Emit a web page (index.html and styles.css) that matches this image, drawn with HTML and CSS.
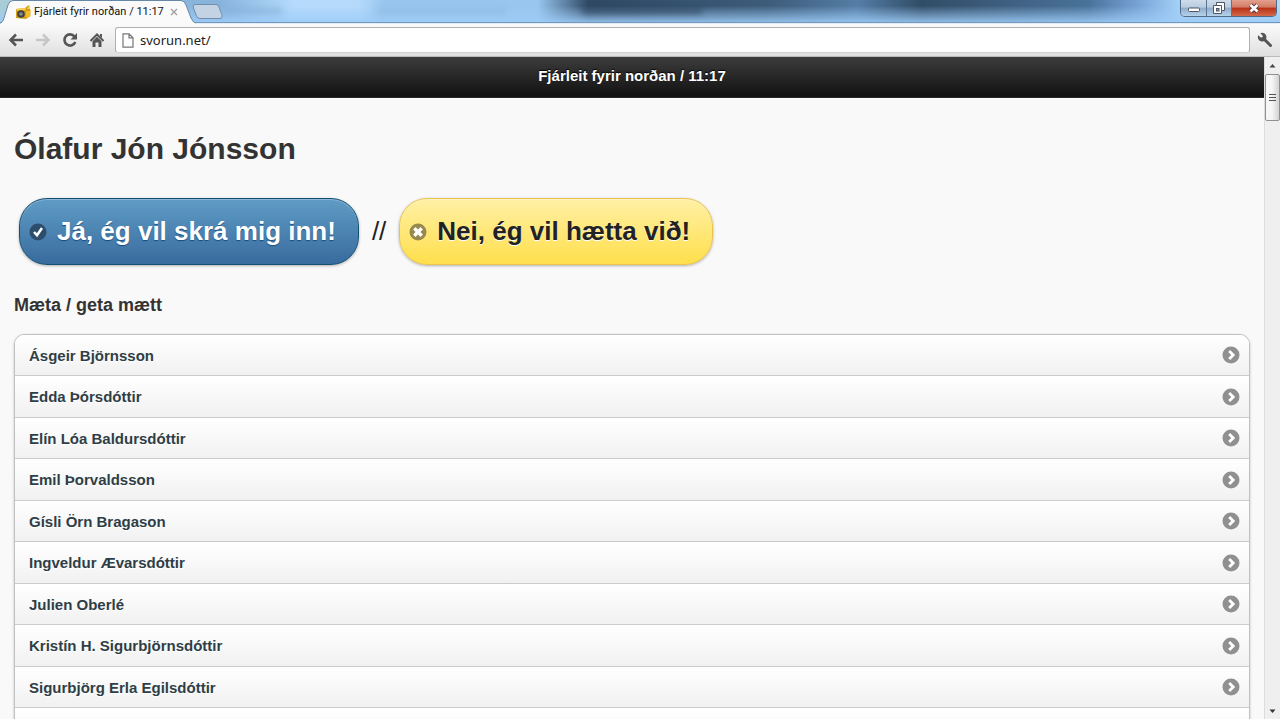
FILE: index.html
```html
<!DOCTYPE html>
<html lang="is">
<head>
  <meta charset="UTF-8" />
  <meta name="viewport" content="width=device-width, initial-scale=1" />
  <title>Fjárleit fyrir norðan / 11:17</title>
  <link rel="stylesheet" href="styles.css">
</head>

<body>
  <!-- Shared icons -->
  <svg class="symbols" aria-hidden="true">
    <symbol id="arrow-r" viewBox="0 0 18 18">
      <circle cx="9" cy="9" r="8.5" fill="#909090" />
      <path d="M7.2 5 L11.2 9 L7.2 13" fill="none" stroke="#fff" stroke-width="2.8" />
    </symbol>
  </svg>

  <!-- Window frame -->
  <div class="titlebar">
    <div class="glass-blur">
      <span class="smudge smudge-a"></span>
      <span class="smudge smudge-b"></span>
      <span class="smudge smudge-c"></span>
    </div>
    <div class="tab">
      <svg class="tab-shape" width="196" height="24" viewBox="0 0 196 24" aria-hidden="true">
        <path d="M-1 23.5 C2 23 3 21 4 18 L8 5 Q9.500 .5 13 .5 L181 .5 Q184.500 .5 186 5 L191 18 Q193 23 197 23.500 V25 H-1 Z" fill="#fafafa" stroke="#6787a6" />
      </svg>
      <svg class="favicon" width="16" height="16" viewBox="0 0 16 16" aria-hidden="true">
        <path d="M1 5 L10 4 L14 1 L14.500 4 L15.500 6 V12 L11 15 L1 14 Z" fill="#d79e12" />
        <path d="M1 5 L10 4 L11 6 L2 6.500 Z" fill="#f6d454" />
        <path d="M12 5 L14.500 1 L15 5 Z" fill="#f3cf49" />
        <path d="M11 7 H15 V12 L11 14 Z" fill="#f0bd25" />
        <circle cx="6" cy="10" r="3.800" fill="#3c4047" />
        <circle cx="6" cy="10" r="1.800" fill="#8b8c8e" />
      </svg>
      <span class="tab-title">Fjárleit fyrir norðan / 11:17</span>
      <button class="tab-close" aria-label="Close tab">
        <svg width="8" height="8" viewBox="0 0 8 8"><path d="M1 1 L7 7 M7 1 L1 7" stroke="#a0a0a0" stroke-width="1.400" /></svg>
      </button>
    </div>
    <button class="new-tab" aria-label="New tab">
      <svg width="32" height="16" viewBox="0 0 32 16"><path d="M3 .5 H24 Q26 .5 27 3 L30 11 Q31 14.500 28 14.500 H8 Q5.500 14.500 4.500 12 L1.500 4 Q.5 .5 3 .5 Z" fill="#c3d3e4" stroke="#6f8faf" /></svg>
    </button>
    <div class="window-buttons">
      <button class="win-button minimize" aria-label="Minimize">
        <svg width="14" height="14" viewBox="0 0 14 14"><rect x="1.500" y="7" width="11" height="3.500" rx="1" fill="#fff" stroke="#4d5663" /></svg>
      </button>
      <button class="win-button restore" aria-label="Restore">
        <svg width="14" height="14" viewBox="0 0 14 14"><path d="M4.500 1.500 H12.500 V9.500 H9.500 V12.500 H1.500 V4.500 H4.500 Z" fill="#fff" stroke="#4d5663" /><path d="M4.500 4.500 H9.500 V9.500" fill="none" stroke="#4d5663" /><rect x="4.500" y="7.500" width="2.500" height="2.500" fill="#8ea8c4" stroke="#4d5663" /></svg>
      </button>
      <button class="win-button close" aria-label="Close">
        <svg width="14" height="14" viewBox="0 0 14 14"><path d="M3.500 4 L10.500 10.500 M10.500 4 L3.500 10.500" stroke="#5b3a42" stroke-width="4.500" /><path d="M3.500 4 L10.500 10.500 M10.500 4 L3.500 10.500" stroke="#fff" stroke-width="2.600" /></svg>
      </button>
    </div>
  </div>

  <!-- Toolbar -->
  <div class="toolbar">
    <button class="tool" aria-label="Back">
      <svg width="16" height="16" viewBox="0 0 16 16"><path d="M15 8 H3 M8 2.500 L2.500 8 L8 13.500" fill="none" stroke="#555" stroke-width="2.500" /></svg>
    </button>
    <button class="tool" aria-label="Forward">
      <svg width="16" height="16" viewBox="0 0 16 16"><path d="M1 8 H13 M8 2.500 L13.500 8 L8 13.500" fill="none" stroke="#c6c6c6" stroke-width="2.500" /></svg>
    </button>
    <button class="tool" aria-label="Reload">
      <svg width="16" height="16" viewBox="0 0 16 16"><path d="M12.500 4.500 A5.600 5.600 0 1 0 13.300 10" fill="none" stroke="#555" stroke-width="2.600" /><path d="M15 1 V7.500 H8.500 Z" fill="#555" /></svg>
    </button>
    <button class="tool" aria-label="Home">
      <svg width="16" height="16" viewBox="0 0 16 16"><path d="M1.500 9 L8 2.500 L14.500 9" fill="none" stroke="#555" stroke-width="2" /><path d="M11 2 H13 V6 L11 4 Z M3.500 9.200 L8 4.800 L12.500 9.200 V15 H9.500 V10.500 H6.500 V15 H3.500 Z" fill="#555" /></svg>
    </button>
    <label class="omnibox">
      <svg width="12" height="15" viewBox="0 0 12 15" aria-hidden="true"><path d="M1 .8 H7 L11 4.800 V14.200 H1 Z M7 .8 V4.800 H11" fill="#fff" stroke="#777" stroke-width="1.200" /></svg>
      <input type="text" value="svorun.net/" aria-label="Address" spellcheck="false">
    </label>
    <button class="tool wrench" aria-label="Settings">
      <svg width="16" height="16" viewBox="0 0 16 16"><path d="M6.500 6.500 L13.500 13.500" stroke="#555" stroke-width="3" stroke-linecap="round" /><path d="M3.300 1.300 A4.300 4.300 0 1 1 1.300 3.300 L4 5.800 L5.800 4.800 L5.600 3.600 Z" fill="#555" /></svg>
    </button>
  </div>

  <!-- Page -->
  <div class="viewport">
    <div class="page">
      <header class="page-header">Fjárleit fyrir norðan / 11:17</header>
      <main class="content">
        <h1>Ólafur Jón Jónsson</h1>
        <div class="choices">
          <button class="choice choice-yes">
            <svg width="18" height="18" viewBox="0 0 18 18" aria-hidden="true"><circle cx="9" cy="9" r="8.500" fill="#2c4e6c" /><path d="M5 9 L8 12.200 L13 5" fill="none" stroke="#fff" stroke-width="2.500" /></svg>
            Já, ég vil skrá mig inn!
          </button>
          <span class="divider">//</span>
          <button class="choice choice-no">
            <svg width="18" height="18" viewBox="0 0 18 18" aria-hidden="true"><circle cx="9" cy="9" r="8.500" fill="#978a4c" /><path d="M5.300 5.300 L12.700 12.700 M12.700 5.300 L5.300 12.700" stroke="#fff" stroke-width="3.400" /></svg>
            Nei, ég vil hætta við!
          </button>
        </div>
        <h3>Mæta / geta mætt</h3>
        <ul class="people">
          <li><a href="#">Ásgeir Björnsson <svg width="18" height="18" aria-hidden="true"><use href="#arrow-r" /></svg></a></li>
          <li><a href="#">Edda Þórsdóttir <svg width="18" height="18" aria-hidden="true"><use href="#arrow-r" /></svg></a></li>
          <li><a href="#">Elín Lóa Baldursdóttir <svg width="18" height="18" aria-hidden="true"><use href="#arrow-r" /></svg></a></li>
          <li><a href="#">Emil Þorvaldsson <svg width="18" height="18" aria-hidden="true"><use href="#arrow-r" /></svg></a></li>
          <li><a href="#">Gísli Örn Bragason <svg width="18" height="18" aria-hidden="true"><use href="#arrow-r" /></svg></a></li>
          <li><a href="#">Ingveldur Ævarsdóttir <svg width="18" height="18" aria-hidden="true"><use href="#arrow-r" /></svg></a></li>
          <li><a href="#">Julien Oberlé <svg width="18" height="18" aria-hidden="true"><use href="#arrow-r" /></svg></a></li>
          <li><a href="#">Kristín H. Sigurbjörnsdóttir <svg width="18" height="18" aria-hidden="true"><use href="#arrow-r" /></svg></a></li>
          <li><a href="#">Sigurbjörg Erla Egilsdóttir <svg width="18" height="18" aria-hidden="true"><use href="#arrow-r" /></svg></a></li>
          <li></li>
        </ul>
      </main>
    </div>
    <div class="scrollbar">
      <svg class="scroll-arrow" width="15" height="17" viewBox="0 0 15 17" aria-hidden="true"><path d="M4.500 10.500 L7.500 7 L10.500 10.500 Z" fill="#444" /></svg>
      <div class="thumb">
        <svg width="7" height="8" viewBox="0 0 7 8" aria-hidden="true"><path d="M0 .5 H7 M0 3.500 H7 M0 6.500 H7" stroke="#555" /></svg>
      </div>
      <svg class="scroll-arrow scroll-down" width="15" height="17" viewBox="0 0 15 17" aria-hidden="true"><path d="M4.500 7.500 L7.500 11 L10.500 7.500 Z" fill="#333" /></svg>
    </div>
  </div>
</body>
</html>
```
FILE: styles.css
```css
/* Base Styles */
* {
  box-sizing: border-box;
}

body {
  margin: 0;
  height: 100vh;
  display: flex;
  flex-direction: column;
  overflow: hidden;
  font-family: "Liberation Sans", Arial, sans-serif;
  background: #f9f9f9;
  color: #333;
}

button {
  font: inherit;
  border: 0;
  padding: 0;
  background: none;
}

svg {
  display: block;
  flex: none;
}

.symbols {
  position: absolute;
  width: 0;
  height: 0;
}

/* Title bar */
.titlebar {
  position: relative;
  flex: none;
  display: flex;
  height: 24px;
  border-bottom: 1px solid #e4ebf2;
  box-shadow: inset 0 -1px 0 #7199bf;
  background:
    linear-gradient(rgba(157, 204, 247, 0) 25%, rgba(157, 204, 247, 0.9)),
    linear-gradient(90deg, #a9cdd6 0, #86b2dc 17%, #b5dafc 23%, #b5dafc 28%, #98c6ee 30%, #98c6ee 42%, #2f4965 46%, #3d5c7a 60%, #557da6 67%, #314c66 72%, #416385 80%, #49729a 85%, #78a4d6 89%, #a2cff5 92%, #b5d9f4 100%);
}

.glass-blur {
  position: absolute;
  inset: 0;
  overflow: hidden;
}

.smudge {
  position: absolute;
  height: 6px;
  top: 8px;
  filter: blur(3px);
  opacity: 0.5;
}

.smudge-a { left: 222px; width: 60px; background: #7aa5d0; }
.smudge-b { left: 376px; width: 130px; background: #88b4da; }
.smudge-c { left: 582px; width: 120px; background: #24384e; }

.tab {
  position: relative;
  display: flex;
  align-items: center;
  width: 192px;
  padding: 0 14px 0 15px;
}

.tab-shape {
  position: absolute;
  top: 0;
  left: 0;
}

.favicon,
.tab-title,
.tab-close {
  position: relative;
}

.tab-title {
  flex: 1;
  margin-left: 3px;
  font: 11px/24px Roboto, sans-serif;
  color: #111;
  white-space: nowrap;
}

.new-tab {
  position: relative;
  align-self: center;
}

.window-buttons {
  position: relative;
  display: flex;
  height: 17px;
  margin: 0 3px 0 auto;
  border: 1px solid #506a88;
  border-top: 0;
  border-radius: 0 0 5px 5px;
  overflow: hidden;
}

.win-button {
  display: flex;
  align-items: center;
  justify-content: center;
  width: 26px;
  border-right: 1px solid #5b7490;
  background: linear-gradient(#cfdcea, #b9cce0 45%, #8fabc9 50%, #b6d2ea);
}

.restore {
  width: 25px;
}

.close {
  width: 44px;
  border-right: 0;
  background: linear-gradient(#e3a08e, #d27a64 45%, #b93016 50%, #d3684a);
}

/* Toolbar */
.toolbar {
  flex: none;
  display: flex;
  align-items: center;
  gap: 11px;
  height: 33px;
  padding: 0 7px 0 8px;
  background: linear-gradient(#fafafa, #e0e0e0);
  border-bottom: 1px solid #b9bcbe;
}

.omnibox {
  flex: 1;
  display: flex;
  align-items: center;
  gap: 6px;
  height: 26px;
  margin-left: -1px;
  padding-left: 6px;
  border: 1px solid #b0b0b0;
  border-bottom-color: #d0d0d0;
  border-radius: 3px;
  background: #fff;
}

.omnibox input {
  flex: 1;
  padding: 0;
  border: 0;
  outline: 0;
  font: 13px "Noto Sans", sans-serif;
  color: #222;
}

.wrench {
  margin-left: -4px;
}

/* Page */
.viewport {
  flex: 1;
  display: flex;
  min-height: 0;
}

.page {
  flex: 1;
  overflow: hidden;
}

.page-header {
  height: 41px;
  background: linear-gradient(#3c3c3c, #111);
  border-bottom: 1px solid #2a2a2a;
  color: #fff;
  font-size: 15px;
  font-weight: bold;
  line-height: 38px;
  text-align: center;
  text-shadow: 0 -1px 1px #000;
}

.content {
  padding: 0 14px;
}

h1 {
  margin: 33px 0 31px;
  font-size: 30px;
  line-height: 36px;
}

.choices {
  display: flex;
  align-items: center;
  gap: 13px;
  padding-left: 5px;
  font-size: 26px;
}

.divider {
  color: #222;
}

.choice {
  display: flex;
  align-items: center;
  gap: 10px;
  height: 67px;
  padding: 0 22px 0 9px;
  border: 1px solid;
  border-radius: 28px;
  font-weight: bold;
  box-shadow: 0 1px 3px rgba(0, 0, 0, 0.3), inset 0 1px 0 rgba(255, 255, 255, 0.3);
}

.choice-yes {
  background: linear-gradient(#5f9cc5, #396b9e);
  border-color: #145072;
  color: #fff;
  text-shadow: 0 1px 1px #194b7e;
}

.choice-no {
  background: linear-gradient(#fff0a5, #ffdf4c);
  border-color: #eac24e;
  color: #222;
  text-shadow: 0 1px 0 #fff;
}

h3 {
  margin: 29px 0 18px;
  font-size: 18px;
  line-height: 22px;
}

/* List */
.people {
  list-style: none;
  margin: 0;
  padding: 0;
  border: 1px solid #c0c0c0;
  border-radius: 10px;
  overflow: hidden;
  box-shadow: 0 1px 3px rgba(0, 0, 0, 0.2);
}

.people li {
  height: 41px;
  border-bottom: 1px solid #ccc;
  background: linear-gradient(#fff, #f1f1f1);
}

.people li:nth-child(even) {
  height: 42px;
}

.people a {
  display: flex;
  align-items: center;
  justify-content: space-between;
  height: 100%;
  padding: 0 9px 0 14px;
  color: #2f3e46;
  font-size: 15px;
  font-weight: bold;
  text-decoration: none;
  text-shadow: 0 1px 0 #fff;
}

/* Scrollbar */
.scrollbar {
  flex: none;
  display: flex;
  flex-direction: column;
  width: 16px;
  background: #efefef;
  border-left: 1px solid #dcdcdc;
}

.thumb {
  display: flex;
  align-items: center;
  justify-content: center;
  height: 47px;
  border: 1px solid #909090;
  border-radius: 2px;
  background: linear-gradient(90deg, #f6f6f6 45%, #d2d2d2);
}

.scroll-down {
  margin-top: auto;
}
```
